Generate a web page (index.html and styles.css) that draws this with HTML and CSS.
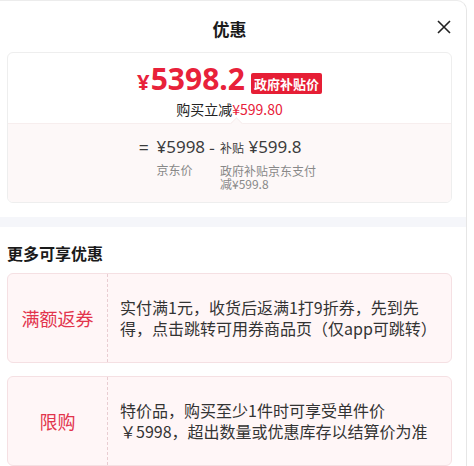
FILE: index.html
```html
<!DOCTYPE html>
<html lang="zh-CN">
<head>
  <meta charset="UTF-8">
  <meta name="viewport" content="width=device-width, initial-scale=1.0">
  <title>优惠</title>
  <link rel="stylesheet" href="styles.css">
</head>
<body>
  <div class="panel">
    <header class="head">
      <span></span>
      <h1 class="title">优惠</h1>
      <svg class="close" width="14" height="14" viewBox="0 0 14 14">
        <path d="M1 1L13 13M13 1L1 13" stroke="#222" stroke-width="1.6" fill="none"/>
      </svg>
    </header>

    <section class="price-card">
      <div class="price-top">
        <div class="price-row">
          <span class="price"><span class="yen">¥</span>5398.2</span>
          <span class="tag">政府补贴价</span>
        </div>
        <div class="reduce">购买立减<span class="red">¥599.80</span></div>
      </div>
      <div class="price-bottom">
        <div class="calc">
          <span class="op op-eq">=</span>
          <div class="col">
            <div class="val">¥5998</div>
            <div class="lbl">京东价</div>
          </div>
          <span class="op op-minus">-</span>
          <div class="col col-sub">
            <div class="val"><small>补贴</small> ¥599.8</div>
            <div class="lbl">政府补贴京东支付减¥599.8</div>
          </div>
        </div>
      </div>
    </section>

    <div class="band"></div>

    <h2 class="more">更多可享优惠</h2>

    <div class="coupon">
      <div class="coupon-name">满额返券</div>
      <div class="coupon-desc">实付满1元，收货后返满1打9折券，先到先得，点击跳转可用券商品页（仅app可跳转）</div>
    </div>
    <div class="coupon">
      <div class="coupon-name">限购</div>
      <div class="coupon-desc">特价品，购买至少1件时可享受单件价￥5998，超出数量或优惠库存以结算价为准</div>
    </div>
  </div>
</body>
</html>
```

FILE: styles.css
```css
body {
  margin: 0;
  background: #fff;
  font-family: "Noto Sans CJK SC", "Noto Sans", sans-serif;
  color: #333;
}
.panel {
  width: 467px;
  height: 466px;
  overflow: hidden;
  border-top: 1px solid #ececec;
  border-right: 1px solid #e6e6e6;
  border-top-right-radius: 10px;
  box-sizing: border-box;
}
.head {
  display: grid;
  grid-template-columns: 1fr auto 1fr;
  align-items: center;
  height: 51px;
  padding: 4px 14px 0 7px;
  box-sizing: border-box;
}
.title {
  margin: 0;
  font-size: 17px;
  font-weight: bold;
  color: #1a1a1a;
}
.close {
  justify-self: end;
  margin-right: 1px;
  margin-top: -4px;
}
.price-card {
  margin: 0 14px 0 7px;
  border: 1px solid #eeeeee;
  border-radius: 6px;
  overflow: hidden;
}
.price-top {
  padding: 5px 0 4px;
  text-align: center;
}
.price-row {
  display: flex;
  justify-content: center;
  height: 41px;
}
.price {
  font-family: "Noto Sans", sans-serif;
  font-weight: bold;
  font-size: 30px;
  line-height: 41px;
  color: #e8213a;
}
.yen {
  font-size: 22px;
  margin-right: 1px;
}
.tag {
  align-self: flex-end;
  margin: 0 0 5px 6px;
  padding: 0 3px;
  height: 21px;
  line-height: 21px;
  background: #e61e35;
  color: #fff;
  font-size: 13px;
  font-weight: bold;
  border-radius: 2px;
}
.reduce {
  font-size: 14px;
  line-height: 20px;
  color: #222;
}
.red {
  color: #e8213a;
}
.price-bottom {
  position: relative;
  background: #fdf8f8;
  border-top: 1px solid #f7eeee;
  padding: 11px 0 12px;
}
.price-bottom::before {
  content: "";
  position: absolute;
  top: -5px;
  left: 224px;
  width: 8px;
  height: 8px;
  background: #fdf8f8;
  border-top: 1px solid #f7eeee;
  border-left: 1px solid #f7eeee;
  transform: rotate(45deg);
}
.calc {
  display: flex;
  justify-content: center;
  align-items: flex-start;
  color: #3c3c3c;
}
.op {
  font-size: 17px;
  line-height: 24px;
}
.op-eq {
  margin-right: 8px;
}
.op-minus {
  margin: 0 5px 0 4px;
}
.val {
  font-family: "Noto Sans", sans-serif;
  font-size: 17px;
  line-height: 24px;
  white-space: nowrap;
}
.val small {
  font-family: "Noto Sans CJK SC", sans-serif;
  font-size: 12px;
}
.lbl {
  margin-top: 4px;
  font-size: 12px;
  line-height: 13px;
  color: #888;
}
.col-sub {
  width: 100px;
}
.band {
  height: 10px;
  margin-top: 14px;
  background: #f5f6fa;
}
.more {
  margin: 14px 0 8px 7px;
  font-size: 16px;
  line-height: 24px;
  font-weight: bold;
  color: #1a1a1a;
}
.coupon {
  display: flex;
  height: 90px;
  margin: 0 14px 13px 7px;
  background: #fff6f7;
  border: 1px solid #f5e0e3;
  border-radius: 6px;
  box-sizing: border-box;
}
.coupon-name {
  width: 99px;
  flex-shrink: 0;
  display: flex;
  align-items: center;
  justify-content: center;
  border-right: 1px dashed #e9cdd2;
  font-size: 18px;
  color: #e2344d;
}
.coupon-desc {
  flex: 1;
  display: flex;
  align-items: center;
  padding: 0 19px 0 12px;
  font-size: 16px;
  line-height: 21px;
  color: #333;
}
```
